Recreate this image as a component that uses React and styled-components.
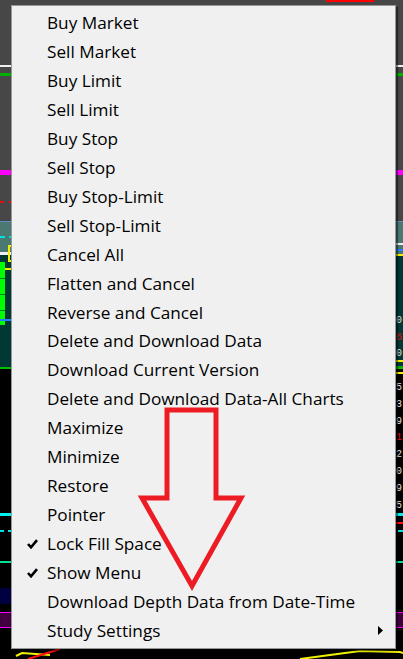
import styled, { createGlobalStyle } from "styled-components";

const GlobalStyle = createGlobalStyle`
  html, body { margin: 0; padding: 0; background: #000; }
  body { width: 403px; height: 659px; overflow: hidden; }
`;

const items = [
  { label: "Buy Market" },
  { label: "Sell Market" },
  { label: "Buy Limit" },
  { label: "Sell Limit" },
  { label: "Buy Stop" },
  { label: "Sell Stop" },
  { label: "Buy Stop-Limit" },
  { label: "Sell Stop-Limit" },
  { label: "Cancel All" },
  { label: "Flatten and Cancel" },
  { label: "Reverse and Cancel" },
  { label: "Delete and Download Data" },
  { label: "Download Current Version" },
  { label: "Delete and Download Data-All Charts" },
  { label: "Maximize" },
  { label: "Minimize" },
  { label: "Restore" },
  { label: "Pointer" },
  { label: "Lock Fill Space", checked: true },
  { label: "Show Menu", checked: true },
  { label: "Download Depth Data from Date-Time" },
  { label: "Study Settings", submenu: true },
];

const digits = [
  { y: 323, c: "#e0e0e0", t: "0" },
  { y: 340, c: "#e01010", t: "6" },
  { y: 356, c: "#e0e0e0", t: "0" },
  { y: 390, c: "#e0e0e0", t: "5" },
  { y: 407, c: "#e0e0e0", t: "3" },
  { y: 424, c: "#e0e0e0", t: "9" },
  { y: 440, c: "#e01010", t: "1" },
  { y: 457, c: "#e0e0e0", t: "2" },
  { y: 474, c: "#e0e0e0", t: "0" },
  { y: 491, c: "#e0e0e0", t: "9" },
  { y: 508, c: "#e0e0e0", t: "5" },
];

function ChartBackdrop() {
  return (
    <Backdrop width="403" height="659" viewBox="0 0 403 659">
      <rect x="0" y="0" width="403" height="659" fill="#000" />
      <rect x="0" y="0" width="403" height="221" fill="#474747" />
      <rect x="0" y="221" width="403" height="34" fill="#4c7872" />
      <rect x="0" y="221" width="403" height="1" fill="#5a8cc0" />
      <rect x="0" y="255" width="403" height="113" fill="#003833" />
      <rect x="0" y="65" width="403" height="2" fill="#f0f0f0" />
      <rect x="0" y="73" width="403" height="3" fill="#00b000" />
      <rect x="0" y="170" width="403" height="5" fill="#ff00ff" />
      <rect x="0" y="201" width="4" height="2" fill="#e01010" />
      <rect x="9" y="201" width="3" height="2" fill="#e01010" />
      <rect x="0" y="236" width="5" height="2" fill="#00e0e0" />
      <rect x="9" y="236" width="3" height="2" fill="#00e0e0" />
      <rect x="0" y="252" width="12" height="3" fill="#f0f0f0" />
      <rect x="9" y="246" width="3" height="15" fill="none" stroke="#f0f000" strokeWidth="2" />
      <rect x="5" y="268" width="7" height="2" fill="#f0f000" />
      <rect x="0" y="262" width="5" height="63" fill="#00ff00" />
      <rect x="0" y="278" width="5" height="1" fill="#008000" />
      <rect x="0" y="294" width="5" height="1" fill="#008000" />
      <rect x="0" y="310" width="5" height="1" fill="#008000" />
      <rect x="0" y="319" width="12" height="2" fill="#2080ff" />
      <rect x="0" y="367" width="403" height="2" fill="#00c000" />
      <rect x="395" y="243" width="8" height="2" fill="#f0f0f0" />
      <rect x="395" y="249" width="8" height="2" fill="#2080ff" />
      <rect x="395" y="254" width="8" height="2" fill="#f0f000" />
      <rect x="395" y="360" width="8" height="2" fill="#f0f000" />
      <rect x="395" y="366" width="8" height="2" fill="#00b000" />
      <rect x="395" y="372" width="8" height="2" fill="#f0f000" />
      <rect x="0" y="513" width="403" height="3" fill="#00f0f0" />
      <rect x="395" y="522" width="8" height="2" fill="#ff1010" />
      <rect x="0" y="530" width="4" height="2" fill="#00e0e0" />
      <rect x="8" y="530" width="4" height="2" fill="#00e0e0" />
      <rect x="398" y="530" width="5" height="2" fill="#00e0e0" />
      <rect x="0" y="561" width="403" height="2" fill="#00e090" />
      <rect x="0" y="588" width="12" height="16" fill="#000040" />
      <rect x="0" y="612" width="403" height="16" fill="#400040" />
      <rect x="0" y="612" width="403" height="1" fill="#ff00ff" />
      <rect x="0" y="627" width="403" height="1" fill="#ff00ff" />
      <rect x="326" y="0" width="48" height="2" fill="#ff0000" />
      {digits.map((d, i) => (
        <DigitText key={i} x="396" y={d.y} fill={d.c}>
          {d.t}
        </DigitText>
      ))}
      <polyline points="16,656 22,653 50,655" fill="none" stroke="#f0f000" strokeWidth="2" />
      <polyline
        points="300,659 330,655 360,651 400,652 403,653"
        fill="none"
        stroke="#f0f000"
        strokeWidth="2"
      />
      <line x1="28" y1="659" x2="60" y2="649" stroke="#ff1010" strokeWidth="2" />
    </Backdrop>
  );
}

function CheckMark() {
  return (
    <svg width="11" height="10" viewBox="0 0 11 10">
      <path d="M1 5 L4 8.3 L10 1.2" fill="none" stroke="#000" strokeWidth="2.6" />
    </svg>
  );
}

function SubArrow() {
  return (
    <svg width="5" height="9" viewBox="0 0 5 9">
      <path d="M0 0 L5 4.5 L0 9 Z" fill="#000" />
    </svg>
  );
}

function RedArrow() {
  return (
    <ArrowSvg width="403" height="659" viewBox="0 0 403 659">
      <polygon
        points="167,410 216,410 216,498 241,498 192,586 142,498 167,498"
        fill="none"
        stroke="#ed1c24"
        strokeWidth="5"
      />
    </ArrowSvg>
  );
}

export default function App() {
  return (
    <Screen>
      <GlobalStyle />
      <ChartBackdrop />
      <Menu>
        {items.map((it) => (
          <MenuItem key={it.label}>
            <CheckSlot>{it.checked && <CheckMark />}</CheckSlot>
            <Label>{it.label}</Label>
            {it.submenu && (
              <ArrowSlot>
                <SubArrow />
              </ArrowSlot>
            )}
          </MenuItem>
        ))}
      </Menu>
      <RedArrow />
    </Screen>
  );
}

const Screen = styled.div`
  position: relative;
  width: 403px;
  height: 659px;
  overflow: hidden;
  background: #000;
`;

const Backdrop = styled.svg`
  display: block;
`;

const DigitText = styled.text`
  font-family: "Liberation Mono", monospace;
  font-size: 10px;
`;

const Menu = styled.div`
  position: absolute;
  left: 11px;
  top: 5px;
  width: 385px;
  height: 644px;
  box-sizing: border-box;
  background: #f0f0f0;
  border: 1px solid #979797;
  box-shadow: 2px 2px 1px rgba(0, 0, 0, 0.45);
  padding: 2px 0 3px;
  display: flex;
  flex-direction: column;
`;

const MenuItem = styled.div`
  position: relative;
  height: 29px;
  display: flex;
  align-items: center;
  font-family: "Open Sans", "Noto Sans", sans-serif;
  font-size: 17.2px;
  color: #000;
`;

const CheckSlot = styled.div`
  width: 36px;
  flex-shrink: 0;
  display: flex;
  justify-content: flex-end;
  padding-right: 10px;
  box-sizing: border-box;
  align-items: center;
`;

const Label = styled.span`
  white-space: nowrap;
  margin-left: -1px;
`;

const ArrowSlot = styled.div`
  position: absolute;
  right: 12px;
  top: 10px;
  display: flex;
`;

const ArrowSvg = styled.svg`
  position: absolute;
  left: 0;
  top: 0;
  pointer-events: none;
`;
